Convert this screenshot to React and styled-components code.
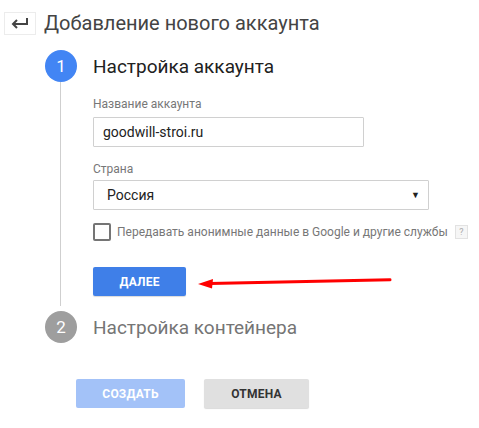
import React from "react";
import styled, { createGlobalStyle } from "styled-components";

const GlobalStyle = createGlobalStyle`
  body {
    margin: 0;
    background: #fff;
    font-family: Roboto, "Liberation Sans", Arial, sans-serif;
  }
`;

const Page = styled.div`
  width: 479px;
  height: 428px;
  box-sizing: border-box;
  padding-top: 9px;
  overflow: hidden;
`;

const Header = styled.div`
  display: flex;
  align-items: center;
  padding-left: 4px;
`;

const BackButton = styled.div`
  width: 32px;
  height: 23px;
  box-sizing: border-box;
  border: 1px solid #ececec;
  display: flex;
  align-items: center;
  justify-content: center;
`;

const Title = styled.h1`
  margin: 0 0 0 8px;
  font-size: 20px;
  font-weight: 400;
  line-height: 28px;
  color: #444;
`;

const Stepper = styled.div`
  margin-top: 13px;
  padding-left: 45px;
`;

const StepHead = styled.div`
  display: flex;
  align-items: center;
  height: 32px;
`;

const Circle = styled.div`
  width: 32px;
  height: 32px;
  border-radius: 50%;
  background: ${(p) => (p.$active ? "#4285f4" : "#9e9e9e")};
  color: #fff;
  font-size: 17px;
  display: flex;
  align-items: center;
  justify-content: center;
  flex-shrink: 0;
`;

const StepTitle = styled.div`
  margin-left: 16px;
  font-size: 19px;
  color: ${(p) => (p.$active ? "#212121" : "#757575")};
`;

const StepBody = styled.div`
  margin-left: 15px;
  margin-bottom: 5px;
  border-left: 1px solid #cfcfcf;
  padding: 14px 0 10px 32px;
`;

const Label = styled.div`
  font-size: 12px;
  line-height: 16px;
  color: #777;
  margin-top: ${(p) => p.$mt || 0}px;
`;

const TextInput = styled.div`
  margin-top: ${(p) => p.$mt || 0}px;
  width: ${(p) => p.$w}px;
  height: 30px;
  box-sizing: border-box;
  border: 1px solid #d0d0d0;
  border-radius: 1px;
  display: flex;
  align-items: center;
  justify-content: space-between;
  padding: 0 ${(p) => p.$pr || 10}px 0 ${(p) => p.$pl || 9}px;
  font-size: 14px;
  color: #222;
`;

const Caret = styled.span`
  font-size: 9px;
  color: #222;
`;

const CheckRow = styled.div`
  margin-top: 13px;
  display: flex;
  align-items: center;
`;

const Checkbox = styled.div`
  width: 18px;
  height: 18px;
  box-sizing: border-box;
  border: 2px solid #757575;
  border-radius: 2px;
`;

const CheckText = styled.span`
  margin-left: 6px;
  font-size: 12px;
  color: #777;
  white-space: nowrap;
`;

const Help = styled.span`
  margin-left: 7px;
  width: 13px;
  height: 14px;
  box-sizing: border-box;
  border: 1px solid #e2e2e2;
  background: #f6f6f6;
  color: #aaa;
  font-size: 9px;
  display: flex;
  align-items: center;
  justify-content: center;
`;

const ButtonRow = styled.div`
  margin-top: 26px;
  display: flex;
  align-items: center;
`;

const Button = styled.div`
  width: ${(p) => p.$w}px;
  height: 29px;
  border-radius: 2px;
  display: flex;
  align-items: center;
  justify-content: center;
  font-size: 12px;
  font-weight: 700;
  letter-spacing: 0.2px;
  background: ${(p) => p.$bg};
  color: ${(p) => p.$color};
  box-shadow: ${(p) => (p.$flat ? "none" : "0 1px 1px rgba(0,0,0,0.15)")};
`;

const Footer = styled.div`
  margin-top: 36px;
  padding-left: 76px;
  display: flex;
  gap: 19px;
`;

const BackIcon = () => (
  <svg width="20" height="14" viewBox="0 0 20 14">
    <path d="M17 2v6H4" fill="none" stroke="#444" strokeWidth="2" />
    <path d="M7 4L3 8l4 4" fill="none" stroke="#444" strokeWidth="2" />
  </svg>
);

const RedArrow = () => (
  <svg width="200" height="14" viewBox="0 0 200 14" style={{ marginLeft: 10 }}>
    <path d="M14 8.5L194 4.8" stroke="#f00" strokeWidth="3" strokeLinecap="round" />
    <path d="M2 9L17 4L16 13.5Z" fill="#f00" />
  </svg>
);

export default function App() {
  return (
    <Page>
      <GlobalStyle />
      <Header>
        <BackButton>
          <BackIcon />
        </BackButton>
        <Title>Добавление нового аккаунта</Title>
      </Header>
      <Stepper>
        <StepHead>
          <Circle $active>1</Circle>
          <StepTitle $active>Настройка аккаунта</StepTitle>
        </StepHead>
        <StepBody>
          <Label>Название аккаунта</Label>
          <TextInput $mt={5} $w={271}>goodwill-stroi.ru</TextInput>
          <Label $mt={14}>Страна</Label>
          <TextInput $mt={3} $w={336} $pl={13} $pr={8}>
            Россия
            <Caret>▼</Caret>
          </TextInput>
          <CheckRow>
            <Checkbox />
            <CheckText>Передавать анонимные данные в Google и другие службы</CheckText>
            <Help>?</Help>
          </CheckRow>
          <ButtonRow>
            <Button $w={93} $bg="#3f7fe8" $color="#fff">ДАЛЕЕ</Button>
            <RedArrow />
          </ButtonRow>
        </StepBody>
        <StepHead>
          <Circle>2</Circle>
          <StepTitle>Настройка контейнера</StepTitle>
        </StepHead>
      </Stepper>
      <Footer>
        <Button $w={109} $bg="#a3c2f8" $color="#fff" $flat>СОЗДАТЬ</Button>
        <Button $w={105} $bg="#e0e0e0" $color="#333">ОТМЕНА</Button>
      </Footer>
    </Page>
  );
}
